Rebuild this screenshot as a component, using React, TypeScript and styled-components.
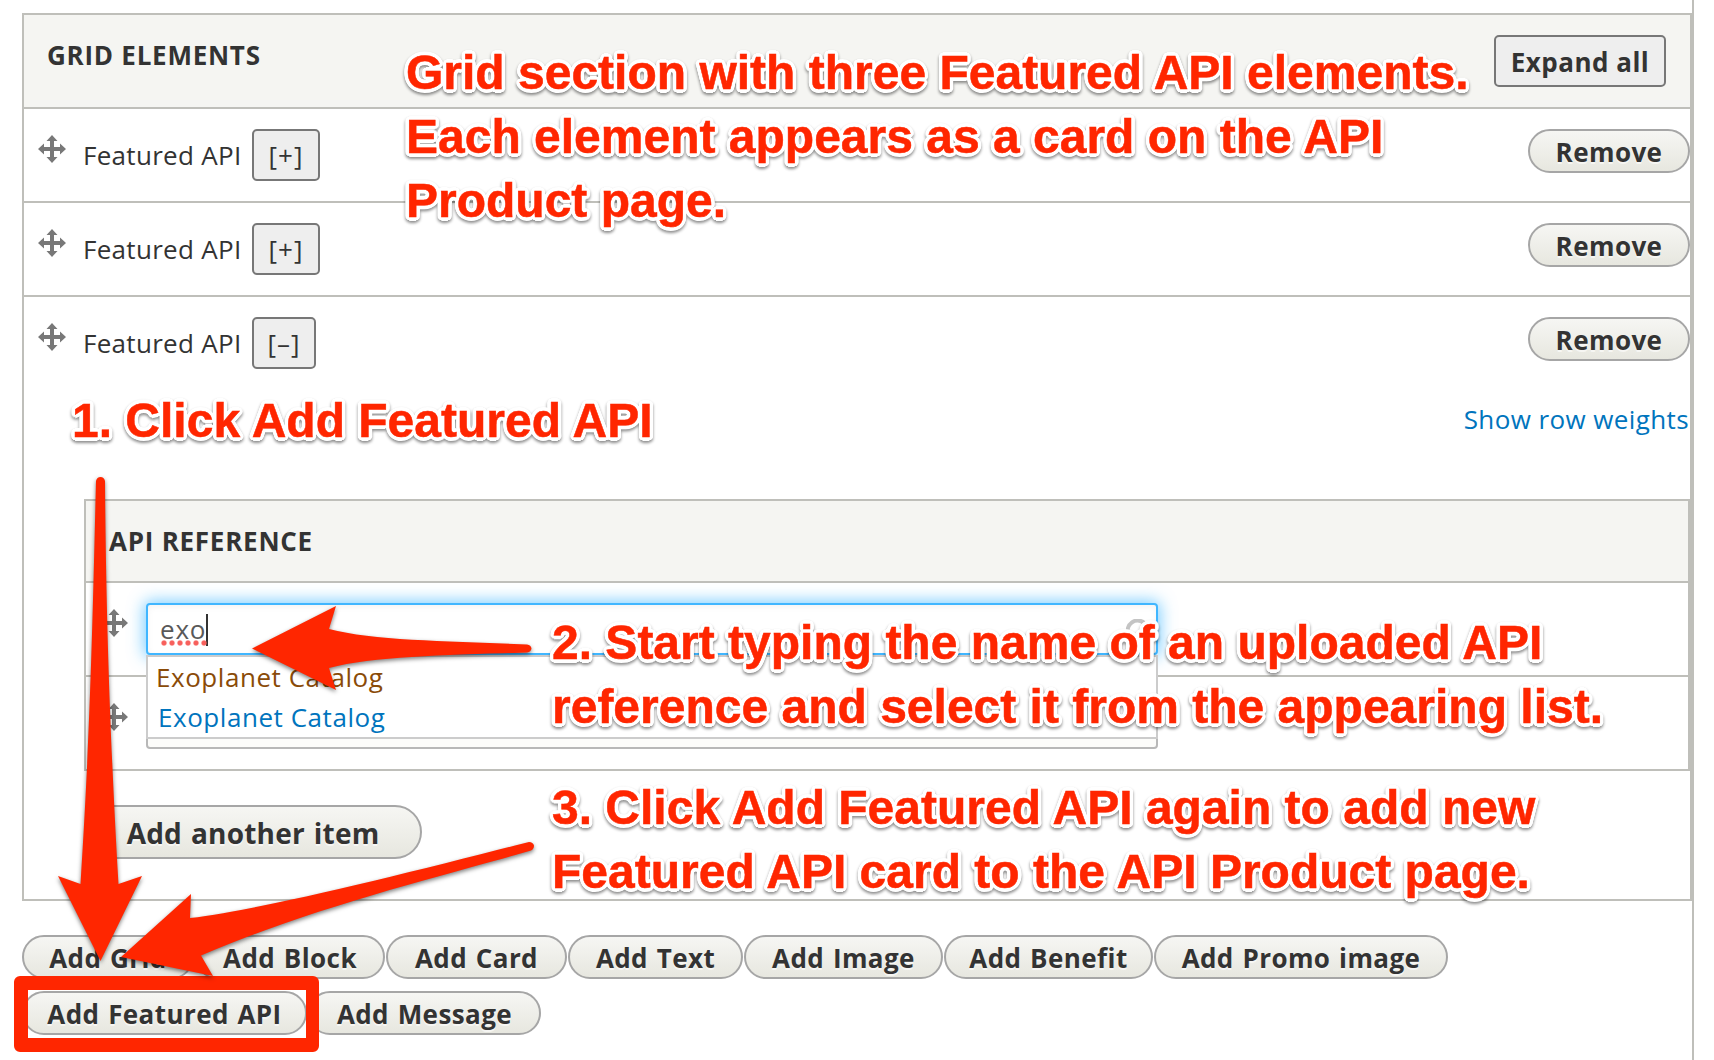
import React from "react";
import styled, { createGlobalStyle } from "styled-components";

const Global = createGlobalStyle`
  *, *::before, *::after { box-sizing: border-box; }
  html, body { margin: 0; background: #fff; }
  body {
    font-family: "Open Sans", "Noto Sans", sans-serif;
    font-size: 26px;
    font-weight: 460;
    color: #333;
    overflow: hidden;
  }
`;

const LINE = "#bfbfba";
const RED = "#ff2600";

const Page = styled.div`
  position: relative;
  width: 1714px;
  height: 1060px;
  overflow: hidden;
`;

const Panel = styled.main`
  width: 1694px;
  height: 1060px;
  padding: 13px 0 0 22px;
  border-right: 2px solid ${LINE};
`;

const Table = styled.section`
  border: 2px solid ${LINE};
`;

const TableHead = styled.header<{ $height: number }>`
  display: flex;
  align-items: center;
  justify-content: space-between;
  height: ${(p) => p.$height}px;
  padding: 0 24px 0 23px;
  background: #f5f5f2;
  border-bottom: 2px solid ${LINE};
`;

const Title = styled.h4<{ $lift?: number }>`
  margin: 0 0 ${(p) => p.$lift || 0}px;
  font-size: 26px;
  line-height: 36px;
  font-weight: 700;
  letter-spacing: 0.75px;
  text-transform: uppercase;
  white-space: nowrap;
`;

const SquareButton = styled.button<{ $width: number; $bold?: boolean; $spacing: number }>`
  width: ${(p) => p.$width}px;
  height: 52px;
  padding: ${(p) => (p.$bold ? 2 : 0)}px 0 0;
  border: 2px solid #777;
  border-radius: 5px;
  background: #eee;
  color: #333;
  font: ${(p) => (p.$bold ? 700 : 460)} 26px/46px "Open Sans", "Noto Sans", sans-serif;
  letter-spacing: ${(p) => p.$spacing}px;
  white-space: nowrap;
`;

const PillButton = styled.button<{ $width: number; $large?: boolean }>`
  flex: none;
  width: ${(p) => p.$width}px;
  height: ${(p) => (p.$large ? 54 : 44)}px;
  padding: 1px 0 0;
  border: 2px solid #a6a6a6;
  border-radius: 27px;
  background: linear-gradient(to bottom, #f6f6f3, #e7e7df);
  color: #333;
  font: 700 ${(p) => (p.$large ? 28 : 26)}px/${(p) => (p.$large ? 48 : 38)}px "Open Sans", "Noto Sans", sans-serif;
  letter-spacing: ${(p) => (p.$large ? 0.2 : 0.42)}px;
  word-spacing: 1.5px;
  text-shadow: 0 2px rgba(255, 255, 255, 0.6);
  white-space: nowrap;
`;

const Row = styled.div<{ $last?: boolean }>`
  display: flex;
  align-items: flex-start;
  height: ${(p) => (p.$last ? 92 : 94)}px;
  padding: 20px 0 0 14px;
  border-bottom: ${(p) => (p.$last ? "0" : `2px solid ${LINE}`)};
`;

const Handle = styled.svg`
  flex: none;
  width: 28px;
  height: 28px;
  margin-top: 6px;
  fill: #787878;
`;

const RowLabel = styled.span`
  width: 169px;
  margin-left: 17px;
  line-height: 52px;
  letter-spacing: 0.3px;
  white-space: nowrap;
`;

const Spacer = styled.span`
  flex: 1;
`;

const Details = styled.div`
  display: flex;
  flex-direction: column;
  height: 510px;
  padding-left: 60px;
`;

const WeightsLink = styled.a`
  align-self: flex-end;
  height: 110px;
  padding-right: 1px;
  color: #0074bd;
  line-height: 60px;
  letter-spacing: 0.4px;
`;

const ReferenceTable = styled(Table)`
  margin-bottom: 34px;
`;

const FieldWrap = styled.div`
  position: relative;
  width: 1012px;
  height: 52px;
  margin-left: 18px;
`;

const Field = styled.div<{ $focus?: boolean }>`
  display: flex;
  align-items: center;
  justify-content: space-between;
  height: 52px;
  padding: 0 6px 0 12px;
  border: 2px solid ${(p) => (p.$focus ? "#40b6ff" : "#b8b8b8")};
  border-radius: 4px;
  background: ${(p) => (p.$focus ? "#fff" : "#fcfcfa")};
  box-shadow: ${(p) =>
    p.$focus ? "0 0 16px 2px #40b6ffb0, inset 0 2px 6px rgba(0,0,0,.05)" : "none"};
  color: #595959;
`;

const Typed = styled.span`
  position: relative;
  height: 32px;
  margin-top: 2px;
  border-right: 2px solid #333;
  line-height: 31px;
  letter-spacing: 0.8px;

  &::after {
    content: "";
    position: absolute;
    left: 0;
    bottom: 0;
    width: 48px;
    height: 6px;
    background: radial-gradient(circle, #f7605c 0 2px, #f7605c00 3.2px) 0 0 / 8px 6px repeat-x;
  }
`;

const Throbber = styled.svg`
  width: 24px;
  height: 24px;
  margin-top: 3px;
  fill: none;
  stroke: #c4c4c4;
  stroke-width: 4;
`;

const Suggestions = styled.div`
  position: absolute;
  z-index: 1;
  top: 52px;
  left: 0;
  width: 1012px;
  height: 84px;
  padding-left: 8px;
  border: 2px solid #ccc;
  background: #fff;
`;

const Suggestion = styled.div<{ $active?: boolean }>`
  height: 40px;
  padding-left: ${(p) => (p.$active ? 0 : 2)}px;
  color: ${(p) => (p.$active ? "#8a4b08" : "#0074bd")};
  line-height: 40px;
  letter-spacing: 0.55px;
`;

const Actions = styled.div`
  display: flex;
  flex-wrap: wrap;
  gap: 12px 1px;
  width: 1500px;
  margin-top: 34px;
`;

const Overlay = styled.div`
  position: absolute;
  z-index: 3;
  inset: 0;
  pointer-events: none;
`;

const ring = Array.from({ length: 20 }, (_, i) => {
  const a = (i / 20) * Math.PI * 2;
  return `${(Math.cos(a) * 3.6).toFixed(2)}px ${(Math.sin(a) * 3.6).toFixed(2)}px 0 #fff`;
}).join(", ");

const Note = styled.p<{ $x: number; $y: number }>`
  position: absolute;
  left: ${(p) => p.$x}px;
  top: ${(p) => p.$y}px;
  margin: 0;
  color: ${RED};
  font: 700 48px/64px "Liberation Sans", Arial, sans-serif;
  -webkit-text-stroke: 0.5px ${RED};
  text-shadow: ${ring};
  filter: drop-shadow(0 2px 1.5px rgba(0, 0, 0, 0.45));
  white-space: pre;
`;

const Highlight = styled.div`
  position: absolute;
  left: 14px;
  top: 976px;
  width: 305px;
  height: 76px;
  border: 14px solid ${RED};
  border-right-width: 13px;
  border-radius: 6px;
`;

const Arrows = styled.svg`
  position: absolute;
  inset: 0;
  width: 1714px;
  height: 1060px;
  fill: ${RED};
  filter: drop-shadow(0 2px 2px rgba(0, 0, 0, 0.5));
`;

const DragHandle = () => (
  <Handle viewBox="0 0 28 28">
    <path d="M14 0l5.500 6H16v6h6V8.500L28 14l-6 5.500V16h-6v6h3.500L14 28l-5.500-6H12v-6H6v3.500L0 14l6-5.500V12h6V6H8.500z" />
  </Handle>
);

const FeaturedRow = ({ open, last }: { open?: boolean; last?: boolean }) => (
  <Row $last={last}>
    <DragHandle />
    <RowLabel>Featured API</RowLabel>
    <SquareButton $width={open ? 64 : 68} $spacing={1}>{open ? "[–]" : "[+]"}</SquareButton>
    <Spacer />
    <PillButton $width={162}>Remove</PillButton>
  </Row>
);

const actions: [string, number][] = [
  ["Add Grid", 172],
  ["Add Block", 190],
  ["Add Card", 181],
  ["Add Text", 175],
  ["Add Image", 199],
  ["Add Benefit", 209],
  ["Add Promo image", 294],
  ["Add Featured API", 285],
  ["Add Message", 233],
];

export default function App() {
  return (
    <Page>
      <Global />
      <Panel>
        <Table>
          <TableHead $height={94}>
            <Title $lift={12}>Grid elements</Title>
            <SquareButton $width={172} $bold $spacing={0.5}>Expand all</SquareButton>
          </TableHead>
          <FeaturedRow />
          <FeaturedRow />
          <FeaturedRow open last />
          <Details>
            <WeightsLink>Show row weights</WeightsLink>
            <ReferenceTable>
              <TableHead $height={82}>
                <Title>API reference</Title>
              </TableHead>
              <Row>
                <DragHandle />
                <FieldWrap>
                  <Field $focus>
                    <Typed>exo</Typed>
                    <Throbber viewBox="0 0 24 24">
                      <path d="M5 19A10 10 0 1 1 21 8" />
                    </Throbber>
                  </Field>
                  <Suggestions>
                    <Suggestion $active>Exoplanet Catalog</Suggestion>
                    <Suggestion>Exoplanet Catalog</Suggestion>
                  </Suggestions>
                </FieldWrap>
              </Row>
              <Row $last>
                <DragHandle />
                <FieldWrap>
                  <Field />
                </FieldWrap>
              </Row>
            </ReferenceTable>
            <PillButton $width={338} $large>Add another item</PillButton>
          </Details>
        </Table>
        <Actions>
          {actions.map(([label, width]) => (
            <PillButton key={label} $width={width}>{label}</PillButton>
          ))}
        </Actions>
      </Panel>
      <Overlay>
        <Highlight />
        <Arrows viewBox="0 0 1714 1060">
          <path d="M96 481Q97 477 100.500 477Q104 477 105 481C106 600 109 720 118.500 884L142 876L100.500 961L58 876L80.500 884C91 720 93 600 96 481Z" />
          <path d="M527 644.500Q531 645 531.500 648.500Q531 652 527 652.500C450 655 375 656 329 668L336 690L252 648.500L336 606L329 629C375 641 450 641 527 644.500Z" />
          <path d="M529 842Q533 842 534 845.500Q534 849 531 850.500C440 877 320 905 201 955.500L213 976L121 957L191 894L190 918C260 910 400 875 529 842Z" />
        </Arrows>
        <Note $x={406} $y={41}>{"Grid section with three Featured API elements.\nEach element appears as a card on the API\nProduct page."}</Note>
        <Note $x={72} $y={389}>1. Click Add Featured API</Note>
        <Note $x={552} $y={611}>{"2. Start typing the name of an uploaded API\nreference and select it from the appearing list."}</Note>
        <Note $x={552} $y={776}>{"3. Click Add Featured API again to add new\nFeatured API card to the API Product page."}</Note>
      </Overlay>
    </Page>
  );
}
